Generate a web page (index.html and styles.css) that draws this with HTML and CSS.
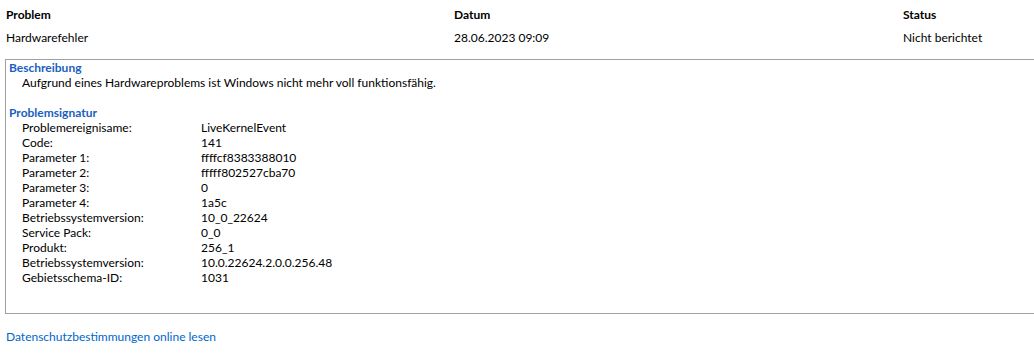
FILE: index.html
```html
<!DOCTYPE html>
<html lang="de">
<head>
  <meta charset="UTF-8">
  <title>Problemdetails</title>
  <link rel="stylesheet" href="styles.css">
</head>
<body>
  <section class="summary">
    <div class="col-head">Problem</div>
    <div class="col-head">Datum</div>
    <div class="col-head">Status</div>
    <div>Hardwarefehler</div>
    <div>28.06.2023 09:09</div>
    <div>Nicht berichtet</div>
  </section>

  <section class="details">
    <h2 class="section-title">Beschreibung</h2>
    <p class="desc">Aufgrund eines Hardwareproblems ist Windows nicht mehr voll funktionsfähig.</p>

    <h2 class="section-title gap">Problemsignatur</h2>
    <dl class="sig">
      <dt>Problemereignisame:</dt><dd>LiveKernelEvent</dd>
      <dt>Code:</dt><dd>141</dd>
      <dt>Parameter 1:</dt><dd>ffffcf8383388010</dd>
      <dt>Parameter 2:</dt><dd>fffff802527cba70</dd>
      <dt>Parameter 3:</dt><dd>0</dd>
      <dt>Parameter 4:</dt><dd>1a5c</dd>
      <dt>Betriebssystemversion:</dt><dd>10_0_22624</dd>
      <dt>Service Pack:</dt><dd>0_0</dd>
      <dt>Produkt:</dt><dd>256_1</dd>
      <dt>Betriebssystemversion:</dt><dd>10.0.22624.2.0.0.256.48</dd>
      <dt>Gebietsschema-ID:</dt><dd>1031</dd>
    </dl>
  </section>

  <a class="privacy" href="#">Datenschutzbestimmungen online lesen</a>
</body>
</html>
```

FILE: styles.css
```css
*,
*::before,
*::after{
  box-sizing: border-box;
}
body{
  margin: 0;
  background: #fff;
  color: #000;
  font-family: Lato, "Noto Sans", sans-serif;
  font-size: 12px;
  line-height: 15px;
  overflow: hidden;
}
.summary{
  display: grid;
  grid-template-columns: 448px 449px 1fr;
  row-gap: 8px;
  padding: 7px 0 0 6px;
}
.col-head{
  font-weight: bold;
}
.details{
  margin: 14px 0 0 5px;
  height: 255px;
  border: 1px solid #a0a0a0;
  border-right: 0;
  padding: 0 0 0 3px;
}
.section-title{
  margin: 0;
  font-size: 12px;
  font-weight: bold;
  color: #1a5fbf;
}
.section-title.gap{
  margin-top: 15px;
}
.desc{
  margin: 0;
  padding-left: 13px;
}
.sig{
  margin: 0;
  padding-left: 13px;
  display: grid;
  grid-template-columns: 179px 1fr;
}
.sig dt,
.sig dd{
  margin: 0;
}
.privacy{
  display: block;
  margin: 15px 0 0 6px;
  color: #0066cc;
  text-decoration: none;
}
```
